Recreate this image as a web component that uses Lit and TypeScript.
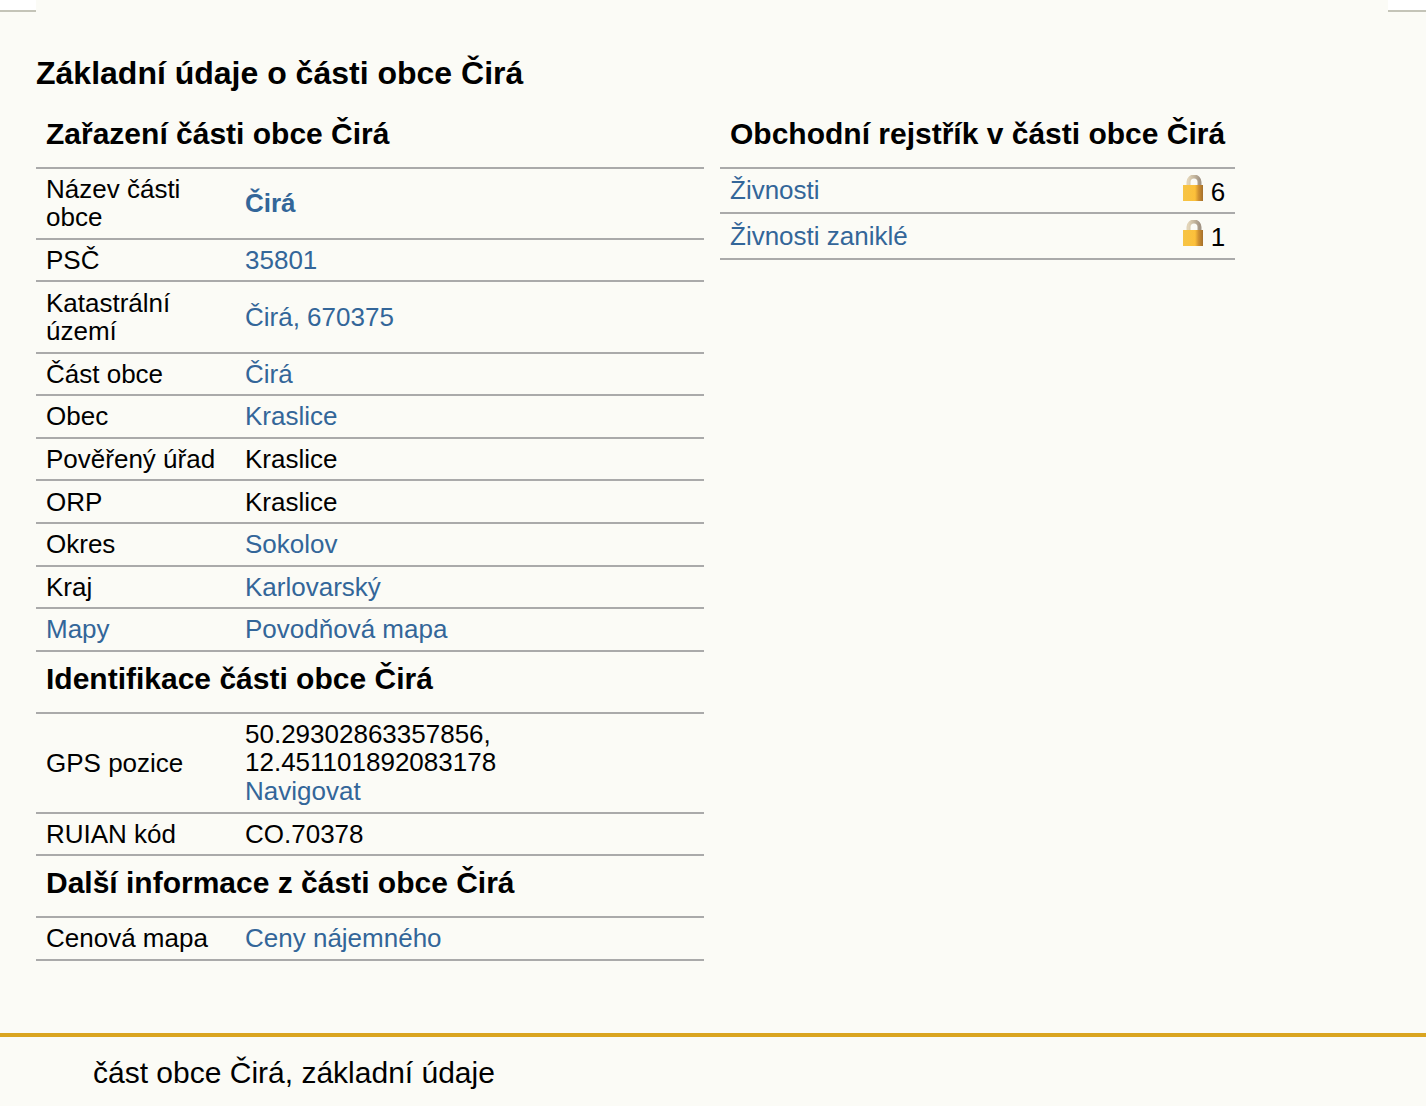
import { LitElement, html, css } from "lit";
import { customElement } from "lit/decorators.js";

const lock = html`<svg class="lock" viewBox="0 0 20 26" width="20" height="26" aria-hidden="true">
  <defs>
    <linearGradient id="body" x1="0" x2="1" y1="0" y2="0">
      <stop offset="0" stop-color="#f6c445"/><stop offset="0.6" stop-color="#fcc03a"/><stop offset="0.78" stop-color="#cf9030"/><stop offset="1" stop-color="#a5702c"/>
    </linearGradient>
    <linearGradient id="sh" x1="0" x2="1" y1="0" y2="0">
      <stop offset="0" stop-color="#e2d4b8"/><stop offset="0.5" stop-color="#c6b89f"/><stop offset="1" stop-color="#a39585"/>
    </linearGradient>
  </defs>
  <path d="M5.5 11V7a5.5 5.5 0 0 1 11 0V11" fill="none" stroke="url(#sh)" stroke-width="4"/>
  <rect x="0" y="10" width="20" height="16" fill="url(#body)"/>
</svg>`;

@customElement("app-root")
export class AppRoot extends LitElement {
  static styles = css`
    :host { display: block; height: 1106px; background: #fbfbf6; color: #000; font: 26px/28.4px "Liberation Sans", Arial, sans-serif; overflow: hidden; }
    a { color: #336699; text-decoration: none; }
    .corners { display: flex; justify-content: space-between; height: 0; }
    .corner { width: 36px; height: 10px; background: #fff; border-bottom: 2px solid #c4c4b8; flex: none; }
    .corner.r { width: 38px; }
    .main { padding: 55px 0 0 36px; height: 1033px; box-sizing: border-box; }
    h1 { margin: 0 0 15px; font-size: 32px; line-height: 36px; font-weight: 700; }
    .cols { display: flex; gap: 16px; align-items: flex-start; }
    table { border-collapse: separate; border-spacing: 0; }
    .left { width: 668px; }
    .right { width: 515px; }
    th { text-align: left; font-size: 30px; line-height: 34px; font-weight: 700; padding: 10px 10px 16px; border-bottom: 2px solid #aaa; white-space: nowrap; }
    tr:first-child th { padding: 11px 10px 15.85px; }
    td { padding: 6.1px 10px; border-bottom: 2px solid #aaa; vertical-align: middle; }
    td.k { width: 179px; }
    td.n { text-align: right; white-space: nowrap; padding: 5.8px 10px 6.4px; }
    .lock { vertical-align: baseline; margin-right: 8px; }
    .link-b { font-weight: 700; }
    .pad-s { padding-block: 0.1px; }
    .pad-m { padding-bottom: 0.6px; }
    footer { border-top: 4px solid #daa520; padding: 18px 0 0 93px; font-size: 30px; line-height: 36px; background: #fbfbf6; }
  `;

  private sect(title: string, rows: any[]) {
    return html`<tr><th colspan="2">${title}</th></tr>
      ${rows.map((r) => html`<tr><td class="k">${r[0]}</td><td>${r[1]}</td></tr>`)}`;
  }

  render() {
    const a = (t: string) => html`<a href="#">${t}</a>`;
    return html`
      <div class="corners"><div class="corner"></div><div class="corner r"></div></div>
      <div class="main">
        <h1>Základní údaje o části obce Čirá</h1>
        <div class="cols">
          <table class="left">
            ${this.sect("Zařazení části obce Čirá", [
              ["Název části obce", html`<a class="link-b" href="#">Čirá</a>`],
              ["PSČ", a("35801")],
              [html`<div class="pad-s">Katastrální území</div>`, a("Čirá, 670375")],
              ["Část obce", a("Čirá")],
              ["Obec", a("Kraslice")],
              ["Pověřený úřad", "Kraslice"],
              ["ORP", "Kraslice"],
              ["Okres", a("Sokolov")],
              ["Kraj", a("Karlovarský")],
              [a("Mapy"), a("Povodňová mapa")],
            ])}
            ${this.sect("Identifikace části obce Čirá", [
              ["GPS pozice", html`<div class="pad-m">50.29302863357856,<br />12.451101892083178<br />${a("Navigovat")}</div>`],
              ["RUIAN kód", "CO.70378"],
            ])}
            ${this.sect("Další informace z části obce Čirá", [["Cenová mapa", a("Ceny nájemného")]])}
          </table>
          <table class="right">
            <tr><th colspan="2">Obchodní rejstřík v části obce Čirá</th></tr>
            <tr><td>${a("Živnosti")}</td><td class="n">${lock}6</td></tr>
            <tr><td>${a("Živnosti zaniklé")}</td><td class="n">${lock}1</td></tr>
          </table>
        </div>
      </div>
      <footer>část obce Čirá, základní údaje</footer>
    `;
  }
}
